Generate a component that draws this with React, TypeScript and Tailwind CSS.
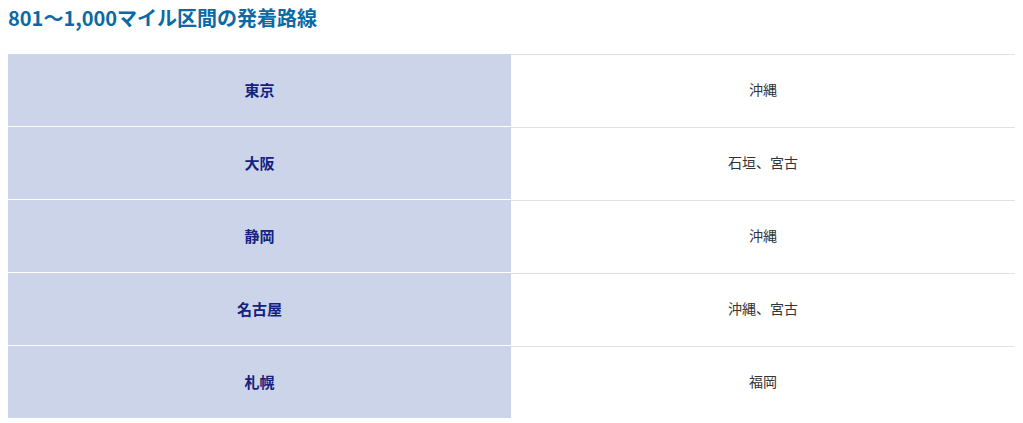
const routes = [
  { from: '東京', to: '沖縄' },
  { from: '大阪', to: '石垣、宮古' },
  { from: '静岡', to: '沖縄' },
  { from: '名古屋', to: '沖縄、宮古' },
  { from: '札幌', to: '福岡' },
];

export default function App() {
  return (
    <div
      className="bg-white min-h-screen px-2 pt-[4px]"
      style={{ fontFamily: '"Noto Sans CJK JP", "Noto Sans", sans-serif' }}
    >
      <h2 className="text-[20px] leading-[27px] font-bold text-[#0b6aa5]">801〜1,000マイル区間の発着路線</h2>

      <div className="mt-[23px] w-[1007px]">
        {routes.map((r) => (
          <div key={r.from} className="flex h-[73px]">
            <div className="w-[503px] bg-[#cbd4e8] border-b border-white flex items-center justify-center text-[15px] font-bold text-[#14217f]">
              {r.from}
            </div>
            <div className="flex-1 border-t border-[#e2e2e2] flex items-center justify-center pb-[4px] text-[14px] text-[#333]">
              {r.to}
            </div>
          </div>
        ))}
      </div>
    </div>
  );
}
